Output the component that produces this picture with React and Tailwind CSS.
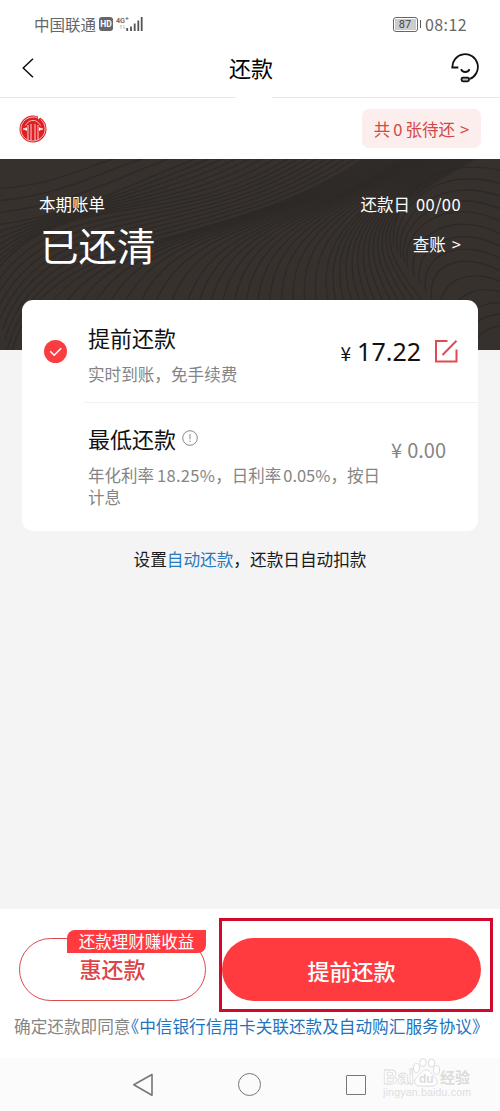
// Key curves of the bill background, the lines in between are interpolated
const LEFT_CURVES = [
  { curve: [-5, 30, 60, 26, 85, 6, 140, -8], steps: 3 },
  { curve: [-5, 66, 80, 56, 130, 24, 215, -8], steps: 7 },
  { curve: [-10, 120, 60, 20, 170, 80, 300, -8], steps: 8 },
  { curve: [10, 200, 40, 60, 230, 100, 375, -8], steps: 10 },
  { curve: [185, 150, 210, 60, 300, 70, 415, -8], steps: 12 },
  { curve: [330, 150, 310, 75, 370, 40, 445, -8], steps: 13 },
  { curve: [436, 150, 385, 85, 355, 60, 495, -8], steps: 1 }
];

const RIGHT_CURVES = [
  { curve: [394, 88, 388, 45, 430, -10, 510, 14], steps: 4 },
  { curve: [408, 108, 398, 70, 450, 30, 510, 68], steps: 4 },
  { curve: [432, 142, 425, 100, 470, 90, 510, 118], steps: 3 },
  { curve: [455, 195, 455, 150, 485, 140, 510, 145], steps: 3 },
  { curve: [480, 200, 480, 182, 500, 178, 510, 178], steps: 1 }
];

const buildPaths = (curves) => {
  const paths = [];
  curves.slice(0, -1).forEach(({ curve, steps }, i) => {
    const next = curves[i + 1].curve;
    for (let s = 0; s < steps; s++) {
      const p = curve.map((v, k) => (v + ((next[k] - v) * s) / steps).toFixed(1));
      paths.push(`M${p[0]} ${p[1]}C${p.slice(2).join(' ')}`);
    }
  });
  return paths;
};

const WAVES = [...buildPaths(LEFT_CURVES), ...buildPaths(RIGHT_CURVES)];

function StatusBar() {
  return (
    <div className="flex h-12 items-center justify-between pl-[34px] pr-[33px] text-[#666]">
      <div className="flex items-center">
        <span className="text-[15.5px] leading-6">中国联通</span>
        <span className="ml-[3px] flex h-[14px] w-[14px] items-center justify-center rounded-[3px] bg-[#666] font-['Roboto'] text-[8.5px] font-bold leading-none text-white">
          HD
        </span>
        <svg className="ml-[3px]" width="28" height="18" viewBox="0 0 28 18">
          <text x="0" y="8" fontFamily="Roboto" fontSize="8" fontWeight="600" fill="#666" textLength="9" lengthAdjust="spacingAndGlyphs">4G</text>
          <path d="M9.5 3.5h3M11 2v3" stroke="#777" strokeWidth=".9" />
          <path d="M5 10v4M3.8 11.5 5 10M8 10v4M9.2 12.5 8 14" stroke="#bbb" strokeWidth=".8" fill="none" />
          <path d="M11.2 13v3M15 11.5V16M18.7 8.5V16M22.3 5.5V16M25.7 2V16" stroke="#555" strokeWidth="1.8" />
        </svg>
      </div>
      <div className="flex items-center">
        <div className="flex h-[15px] w-[25px] items-center justify-center rounded-[3px] border-[1.5px] border-[#666] p-px">
          <span className="flex h-full w-full items-center justify-center bg-[#ccc] font-['Roboto'] text-[11px] leading-none text-[#444]">87</span>
        </div>
        <span className="ml-[2px] h-2 w-[1.5px] bg-[#555]" />
        <span className="ml-1 text-[16px] leading-6 tracking-[0.4px]">08:12</span>
      </div>
    </div>
  );
}

function Header() {
  return (
    <div className="flex h-[49px] items-center justify-between pl-[22px] pr-5">
      <svg className="-mt-[9px]" width="12" height="20" viewBox="0 0 12 20" fill="none" stroke="#111" strokeWidth="1.5">
        <path d="M11 .7 1.200 10 11 19.300" />
      </svg>
      <h1 className="-mt-[11px] ml-[18px] text-[22px] leading-8 text-black">还款</h1>
      <svg className="-mt-[9px]" width="30" height="30" viewBox="0 0 30 30" fill="none" stroke="#111" strokeWidth="1.8">
        <path d="M8.3 14.500H2.300A12.800 12.800 0 1 1 19.500 26" />
        <path d="M11 16.200c2 3.700 6.600 3.700 8.600 0" />
        <rect x="11.500" y="24.700" width="7.500" height="3.600" rx="1.500" fill="#bbb" />
      </svg>
    </div>
  );
}

function BankRow() {
  return (
    <div className="flex h-[61px] items-center justify-between pl-[19px] pr-[19px]">
      <svg width="28" height="28" viewBox="0 0 28 28" fill="none">
        <circle cx="14" cy="14" r="13.500" fill="#de1f23" />
        <path d="M18.500 2.300C9 .5 1.900 6 1.900 14S8 26 14 26s12.100-5 12.100-12c0-4-1.800-7.500-4.500-9.500" stroke="#fff" strokeWidth=".7" />
        <path d="M9 24.500V10M12 25.500V9M16 25.500V9M19 24.500V10" stroke="#ffe3e0" strokeWidth=".9" />
        <path d="M6.500 10.500C8 7.500 10.500 6 12.500 5.500h3c2 .5 4.500 2 6 5" stroke="#ffe3e0" strokeWidth=".8" />
        <path d="M4.200 14h3.300M7.300 12.500v3.200M23.800 14h-3.300M20.700 12.500v3.200" stroke="#fff" strokeWidth="1.300" />
        <path d="M19 0v4.500l2.800-2.500" fill="#fff" />
      </svg>
      <button className="h-[39px] w-[119px] whitespace-nowrap rounded-[7px] bg-[#fdeeee] text-[16.500px] leading-[40px] text-[#d24848]">
        共<span className="mx-[3px]">0</span>张待还<span className="ml-[5px]">&gt;</span>
      </button>
    </div>
  );
}

function BillBanner() {
  return (
    <div className="relative h-[191px] overflow-hidden bg-[#37312e] text-white">
      <svg className="absolute inset-0" width="500" height="191" fill="none" stroke="#2d2926" strokeWidth="1.3">
        {WAVES.map((d) => (
          <path key={d} d={d} />
        ))}
      </svg>
      <div className="relative flex justify-between pl-[39px] pr-[39px] pt-[33px]">
        <div>
          <div className="text-[16.5px] leading-6">本期账单</div>
          <div className="mt-px ml-px text-[38.5px] leading-[54px]">已还清</div>
        </div>
        <div className="text-right text-[16.5px] leading-6">
          <div>
            还款日<span className="ml-[6px] tracking-[0.4px]">00/00</span>
          </div>
          <div className="mt-4">
            查账<span className="ml-[6px]">&gt;</span>
          </div>
        </div>
      </div>
    </div>
  );
}

function RepayCard() {
  return (
    <div className="relative mx-[22px] -mt-[50px] h-[231px] rounded-[11px] bg-white">
      <div className="flex h-[103px] pl-[22px]">
        <svg className="mt-10" width="23" height="23" viewBox="0 0 23 23">
          <circle cx="11.5" cy="11.5" r="11.5" fill="#fb3c40" />
          <path d="M6.2 11.2l4 4 7-7" fill="none" stroke="#fff" strokeWidth="1.5" />
        </svg>
        <div className="ml-[17px] flex flex-1 justify-between border-b border-[#f2f2f2] pl-1 pr-5">
          <div className="pt-[20px]">
            <div className="text-[22px] leading-[34px] text-[#111]">提前还款</div>
            <div className="mt-[8px] text-[16.6px] leading-6 text-[#858585]">实时到账，免手续费</div>
          </div>
          <div className="flex items-start pt-[34px] text-[#111]">
            <span className="mt-[3px] mr-[6px] text-[19px] leading-8">¥</span>
            <span className="font-['Noto_Sans'] text-[25px] leading-[34px]">17.22</span>
            <svg className="ml-[13px] mt-[5px]" width="24" height="24" viewBox="0 0 24 24" fill="none" stroke="#e04b50" strokeWidth="2">
              <path d="M13.5 2H2v20.5h20.500V10.500M8.500 16L22.500 1.700" />
            </svg>
          </div>
        </div>
      </div>
      <div className="flex h-[128px] justify-between pl-[66px] pr-8">
        <div className="w-[300px] shrink-0 pt-[18px]">
          <div className="flex items-center text-[22px] leading-[34px] text-[#111]">
            最低还款
            <svg className="ml-[6px]" width="16" height="16" viewBox="0 0 16 16" fill="none" stroke="#888">
              <circle cx="8" cy="8" r="7.3" />
              <path d="M8 4v5.3M8 10.7v1.300" />
            </svg>
          </div>
          <div className="mt-[9px] whitespace-nowrap text-[16.5px] leading-[22px] text-[#858585]">
            年化利率<span className="ml-[3px] tracking-[0.3px]">18.25%</span>，日利率<span className="ml-[2px]">0.05%</span>，按日
            <br />
            计息
          </div>
        </div>
        <div className="-ml-5 flex whitespace-nowrap pt-[31px] text-[20px] leading-8 text-[#858585]">
          <span className="mr-[5px]">¥</span>0.00
        </div>
      </div>
    </div>
  );
}

function Footer() {
  return (
    <div className="h-[149px] bg-white pt-[9px]">
      <div className="flex pl-[19px]">
        <div className="relative mt-5 h-[63px] w-[187px] rounded-full border-[1.5px] border-[#d9484b] text-center text-[22px] font-medium leading-[59px] text-[#dc4549]">
          惠还款
          <div className="absolute -right-[1px] -top-[9px] h-[23px] w-[139px] rounded-br-[8px] rounded-tl-[8px] bg-[#ff3b40] text-[16.5px] font-normal leading-[23px] text-white">
            还款理财赚收益
          </div>
        </div>
        <div className="ml-[13px] h-[94px] w-[274px] border-[3px] border-[#d00a2c] pt-[17px]">
          <button className="block h-[63px] w-[259px] rounded-full bg-[#ff3b40] text-[22px] font-medium leading-[60px] text-white">
            提前还款
          </button>
        </div>
      </div>
      <div className="mt-[2px] whitespace-nowrap pl-[14px] text-[16.65px] leading-6 text-[#858585]">
        确定还款即同意<span className="-ml-[8px] text-[#2273be]">《中信银行信用卡关联还款及自动购汇服务协议》</span>
      </div>
    </div>
  );
}

function Watermark() {
  return (
    <svg className="absolute right-[25px] top-0" width="96" height="42" viewBox="0 0 96 42" stroke="#dcdcdc" fill="#fff">
      <g fontWeight="bold" strokeWidth=".8">
        <text x="4" y="26" fontFamily="Liberation Sans, sans-serif" fontSize="20" textLength="31" lengthAdjust="spacingAndGlyphs">Bai</text>
        <text x="61" y="25" fontFamily="Noto Sans CJK SC, sans-serif" fontSize="15" fill="#dcdcdc" stroke="none">经验</text>
      </g>
      <ellipse cx="37.5" cy="10" rx="3" ry="4.5" />
      <ellipse cx="44" cy="4.5" rx="3.2" ry="4" />
      <ellipse cx="52.5" cy="5" rx="3.2" ry="4" />
      <ellipse cx="57.5" cy="12" rx="3" ry="4.5" />
      <path d="M47 12c-4 0-5 4-8.5 6.500C33 23 36 28 41 28h12c6 0 7-6 2-9.500C52 16 51 12 47 12z" />
      <text x="40" y="25" fontFamily="Liberation Sans, sans-serif" fontWeight="bold" fontSize="12" fill="#dcdcdc" stroke="none">du</text>
      <text x="4" y="38" fontFamily="Liberation Sans, sans-serif" fontSize="10.500" fill="#dedede" stroke="none" textLength="88">jingyan.baidu.com</text>
    </svg>
  );
}

function NavBar() {
  return (
    <div className="relative flex h-[53px] items-center gap-[84px] bg-[#fbfbfb] pl-[132px]">
      <svg width="22" height="24" viewBox="0 0 22 24" fill="none" stroke="#777" strokeWidth="1.6" strokeLinejoin="round">
        <path d="M20 1.5v20.800L1.800 11.800z" />
      </svg>
      <span className="h-[23px] w-[23px] rounded-full border-[1.5px] border-[#777]" />
      <span className="ml-px h-5 w-5 rounded-[1px] border-[1.5px] border-[#777]" />
      <Watermark />
    </div>
  );
}

export default function App() {
  return (
    <div className="flex h-[1111px] w-[500px] flex-col overflow-hidden bg-[#f4f4f4] font-['Noto_Sans_CJK_SC',sans-serif]">
      <div className="bg-white">
        <StatusBar />
        <Header />
        <div className="flex h-px justify-between">
          <span className="w-[236px] bg-[#e8e8e8]" />
          <span className="w-[228px] bg-[#e8e8e8]" />
        </div>
        <BankRow />
      </div>
      <BillBanner />
      <RepayCard />
      <div className="mt-4 flex-1 text-center text-[16.65px] leading-6 text-[#1a1a1a]">
        设置<span className="text-[#2a7abf]">自动还款</span>，还款日自动扣款
      </div>
      <Footer />
      <NavBar />
    </div>
  );
}
